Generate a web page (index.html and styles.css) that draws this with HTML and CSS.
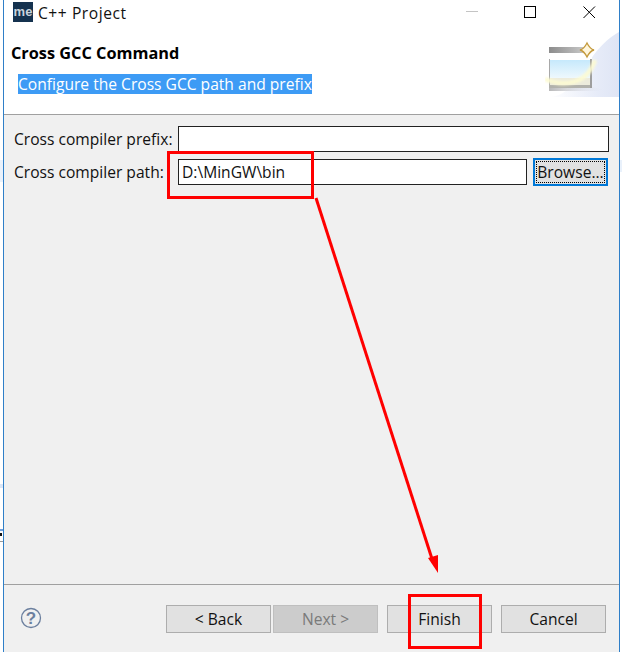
FILE: index.html
```html
<!DOCTYPE html>
<html lang="en">
<head>
<meta charset="utf-8">
<title>C++ Project</title>
<link rel="stylesheet" href="styles.css">
</head>
<body>
<div class="window">
  <div class="titlebar">
    <span class="app-icon">me</span>
    <span class="title">C++ Project</span>
    <div class="controls">
      <svg class="ctl" width="46" height="24" viewBox="0 0 46 24"><path d="M10 11.500h12" stroke="#c4c4c4" fill="none"/></svg>
      <svg class="ctl" width="58" height="24" viewBox="0 0 58 24"><rect x="22.500" y="6.500" width="11" height="11" stroke="#000" fill="none"/></svg>
      <svg class="ctl" width="58" height="24" viewBox="0 0 58 24"><path d="M23.500 6.500l11.500 11.500M35 6.500l-11.500 11.500" stroke="#000" fill="none"/></svg>
    </div>
  </div>
  <header class="banner">
    <div class="banner-text">
      <h1 class="heading">Cross GCC Command</h1>
      <p class="subtitle"><span class="selected">Configure the Cross GCC path and prefix</span></p>
    </div>
    <svg class="wizard" width="74" height="66" viewBox="0 0 74 66">
      <defs>
        <linearGradient id="glow" x1="0" y1="0" x2="1" y2="0">
          <stop offset="0" stop-color="#fff"/>
          <stop offset=".7" stop-color="#e6ebf8"/>
          <stop offset="1" stop-color="#dfe5f5"/>
        </linearGradient>
        <linearGradient id="bar" x1="0" y1="0" x2="1" y2="0">
          <stop offset="0" stop-color="#8c8c8c"/>
          <stop offset="1" stop-color="#cfcfcf"/>
        </linearGradient>
        <linearGradient id="pane" x1="0" y1="0" x2="0" y2="1">
          <stop offset="0" stop-color="#c6e9fc"/>
          <stop offset="1" stop-color="#eef8fd"/>
        </linearGradient>
        <linearGradient id="shadow" x1="0" y1="0" x2="1" y2="0">
          <stop offset="0" stop-color="#b8b8b8"/>
          <stop offset="1" stop-color="#e4e8f6" stop-opacity="0"/>
        </linearGradient>
        <filter id="soft" x="-20%" y="-20%" width="140%" height="140%">
          <feGaussianBlur stdDeviation="1"/>
        </filter>
      </defs>
      <path d="M3 65C35 65 38 20 74 0V65Z" fill="url(#glow)"/>
      <path d="M4 55H47L62 58 47 59H4Z" fill="url(#shadow)"/>
      <rect x="4" y="15" width="43" height="41" fill="#fff"/>
      <rect x="4" y="15" width="40" height="6" fill="url(#bar)"/>
      <rect x="5" y="28" width="41" height="18" fill="url(#pane)"/>
      <rect x="5" y="46" width="41" height="8" fill="#ecebdc"/>
      <rect x="4" y="27" width="1" height="29" fill="#a8a8a8"/>
      <rect x="4" y="53" width="43" height="3" fill="#b2b2ac"/>
      <rect x="45" y="27" width="2" height="29" fill="#9e9e9e"/>
      <path d="M0 47C18 55 42 53 50 28" stroke="#fdfbd2" stroke-width="4.500" fill="none" opacity=".9" filter="url(#soft)"/>
      <path d="M35 18q4-1 7-7 3 6 7 7-4 1-7 7-3-6-7-7z" fill="#fff6dc" stroke="#c49a3c" stroke-width="1.300"/>
    </svg>
  </header>
  <main class="content">
    <div class="row">
      <label class="label">Cross compiler prefix:</label>
      <div class="input"></div>
    </div>
    <div class="row row-path">
      <label class="label">Cross compiler path:</label>
      <div class="input">D:\MinGW\bin</div>
      <button class="btn browse"><span class="focus">Browse...</span></button>
    </div>
  </main>
  <footer class="footer">
    <svg class="help" width="22" height="22" viewBox="0 0 22 22">
      <circle cx="11" cy="11" r="9.500" fill="none" stroke="#6b7f9e" stroke-width="1.300"/>
      <text x="11" y="17" text-anchor="middle" class="help-mark">?</text>
    </svg>
    <div class="buttons">
      <button class="btn">&lt; Back</button>
      <button class="btn disabled">Next &gt;</button>
      <button class="btn finish">Finish</button>
      <button class="btn">Cancel</button>
    </div>
  </footer>
</div>
<svg class="annotations" width="622" height="652" viewBox="0 0 622 652">
  <rect x="0" y="160" width="3" height="22" fill="#e9f1fb"/>
  <rect x="620" y="160" width="2" height="12" fill="#e9f1fb"/>
  <rect x="0" y="484" width="3" height="4" fill="#dbe6f6"/>
  <rect x="0" y="529" width="3" height="2" fill="#6f9fdc"/>
  <rect x="0" y="533" width="2" height="3" fill="#111"/>
  <rect x="0" y="541" width="3" height="1" fill="#999"/>
  <rect x="168.500" y="152.500" width="144" height="45" fill="none" stroke="#f00" stroke-width="3"/>
  <rect x="409.500" y="595.500" width="71" height="52" fill="none" stroke="#f00" stroke-width="3"/>
  <path d="M316 198L433 562" stroke="#f00" stroke-width="3" fill="none"/>
  <path d="M438 573L428 558L438 555Z" fill="#f00"/>
</svg>
</body>
</html>
```
FILE: styles.css
```css
* { box-sizing: border-box; }
html, body { margin: 0; height: 100%; background: #fff; overflow: hidden; }
body {
  width: 622px;
  height: 652px;
  padding: 0 2px 0 3px;
  font-family: "Open Sans", "Noto Sans", sans-serif;
  font-size: 15.6px;
  color: #111;
}
.window {
  height: 652px;
  display: flex;
  flex-direction: column;
  border-left: 1px solid #2f7fc8;
  border-right: 1px solid #2f7fc8;
  background: #f0f0f0;
}
.titlebar {
  height: 24px;
  flex: none;
  background: #fff;
  display: flex;
  align-items: center;
  padding-left: 9px;
  padding-right: 1px;
}
.app-icon {
  width: 20px;
  height: 20px;
  background: #15324f;
  color: #c9d2dc;
  font-family: "Liberation Sans", sans-serif;
  font-weight: 700;
  font-size: 13px;
  line-height: 20px;
  text-align: center;
}
.title { margin-left: 5px; padding-top: 2px; font-size: 15.6px; letter-spacing: .55px; }
.controls { margin-left: auto; display: flex; }
.ctl { display: block; }
.banner {
  height: 91px;
  flex: none;
  background: #fff;
  border-bottom: 1px solid #a0a0a0;
  display: flex;
  justify-content: space-between;
}
.banner-text { padding: 18px 0 0 7px; }
.heading { margin: 0; font-size: 16.3px; line-height: 22px; font-weight: 700; color: #000; }
.subtitle { margin: 10px 0 0 7px; line-height: 20px; }
.selected { background: #3d9bf5; color: #fff; display: inline-block; height: 20px; }
.wizard { margin-top: 8px; }
.content { flex: 1; padding: 11px 10px 0 10px; }
.row { display: flex; align-items: center; }
.row-path { margin-top: 6px; }
.label { width: 164px; flex: none; white-space: nowrap; }
.input {
  flex: 1;
  height: 26px;
  background: #fff;
  border: 1px solid #222;
  padding-left: 3px;
  line-height: 24px;
}
.btn {
  font: inherit;
  color: inherit;
  width: 105px;
  height: 28px;
  padding: 0;
  background: #e1e1e1;
  border: 1px solid #adadad;
}
.browse {
  flex: none;
  width: 75px;
  margin: 0 1px 0 6px;
  border: 2px solid #0078d7;
  padding: 1px;
}
.focus {
  display: block;
  height: 100%;
  border: 1px dotted #000;
  line-height: 20px;
}
.disabled { background: #cccccc; color: #7a7a7a; border-color: #bfbfbf; }
.footer {
  height: 68px;
  flex: none;
  border-top: 1px solid #a0a0a0;
  display: flex;
  align-items: flex-start;
  padding-top: 20px;
}
.help { margin: 2px 0 0 16px; }
.help-mark { font-family: "Liberation Sans", sans-serif; font-weight: 700; font-size: 17px; fill: #6b7f9e; }
.buttons { margin-left: auto; margin-right: 13px; display: flex; gap: 2px; }
.finish { margin-left: 7px; margin-right: 7px; }
.annotations { position: absolute; left: 0; top: 0; pointer-events: none; }
```
